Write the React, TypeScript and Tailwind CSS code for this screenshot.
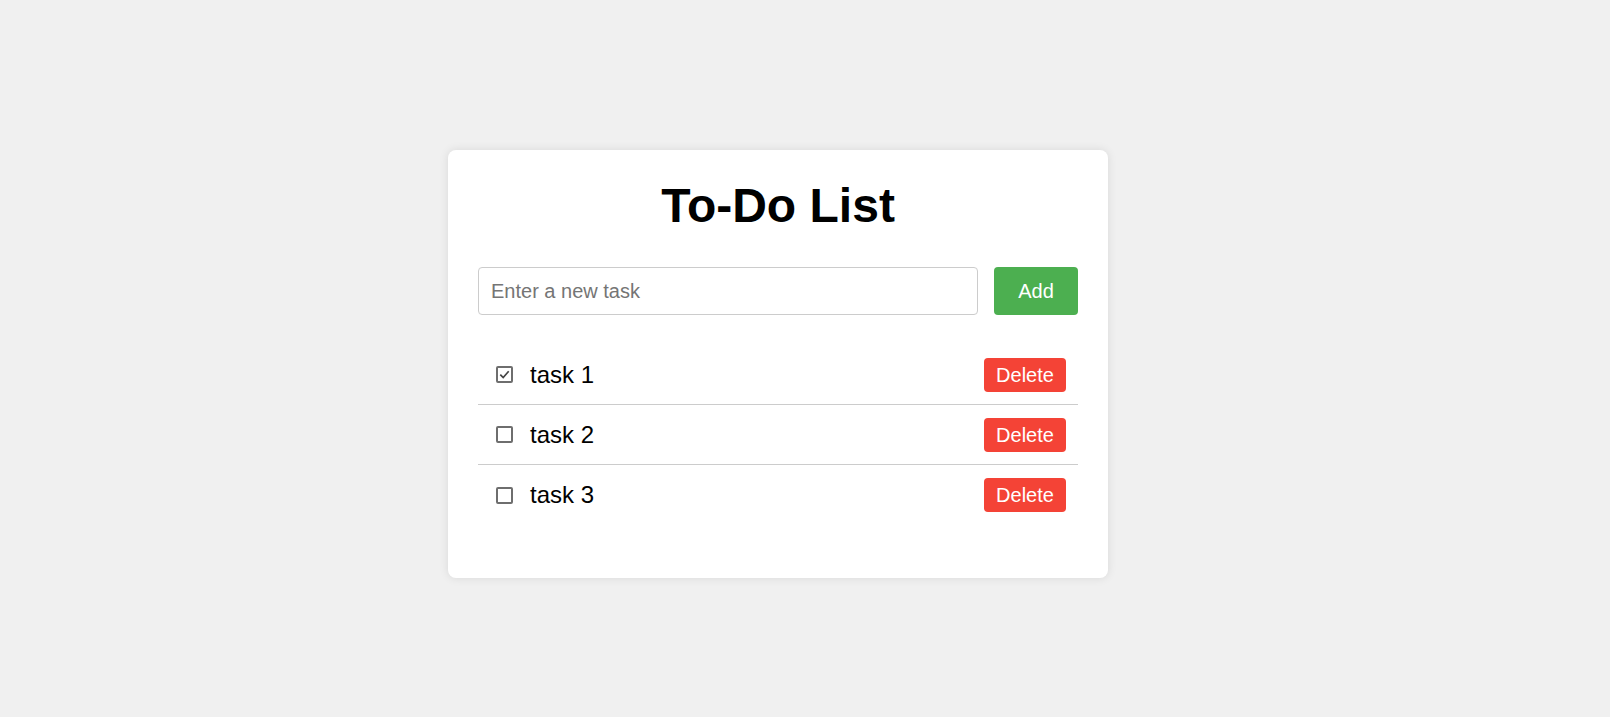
import React, { useState } from "react";

type Task = { id: number; text: string; done: boolean };

export default function App() {
  const [tasks, setTasks] = useState<Task[]>([
    { id: 1, text: "task 1", done: true },
    { id: 2, text: "task 2", done: false },
    { id: 3, text: "task 3", done: false },
  ]);
  const [value, setValue] = useState("");

  const toggle = (id: number) =>
    setTasks((t) => t.map((x) => (x.id === id ? { ...x, done: !x.done } : x)));
  const remove = (id: number) => setTasks((t) => t.filter((x) => x.id !== id));
  const add = () => {
    if (!value.trim()) return;
    setTasks((t) => [...t, { id: Date.now(), text: value.trim(), done: false }]);
    setValue("");
  };

  return (
    <div
      className="min-h-[717px] w-full bg-[#f0f0f0] pt-[150px] pl-[448px]"
      style={{ fontFamily: '"Liberation Sans", Arial, sans-serif' }}
    >
      <div className="w-[660px] rounded-[8px] bg-white px-[30px] pt-[30px] pb-[30px] shadow-[0_0_10px_rgba(0,0,0,0.1)]">
        <h1 className="m-0 text-center text-[48px] font-bold leading-[52px] text-black">
          To-Do List
        </h1>
        <div className="mt-[35px] flex h-[48px] items-stretch">
          <input
            value={value}
            onChange={(e) => setValue(e.target.value)}
            onKeyDown={(e) => e.key === "Enter" && add()}
            placeholder="Enter a new task"
            className="min-w-0 flex-1 rounded-[4px] border border-[#cccccc] px-[12px] text-[20px] text-black outline-none placeholder:text-[#757575]"
          />
          <button
            onClick={add}
            className="ml-[16px] w-[84px] rounded-[4px] bg-[#4caf50] text-[20px] text-white"
          >
            Add
          </button>
        </div>
        <ul className="mt-[30px] mb-[23px]">
          {tasks.map((t, i) => (
            <li
              key={t.id}
              className={`box-border flex h-[60px] items-center pl-[18px] pr-[12px] ${
                i < tasks.length - 1 ? "border-b border-[#cccccc]" : ""
              }`}
            >
              <label className="relative flex h-[17px] w-[17px] shrink-0 cursor-pointer items-center justify-center">
                <input
                  type="checkbox"
                  checked={t.done}
                  onChange={() => toggle(t.id)}
                  className="absolute inset-0 m-0 h-[17px] w-[17px] cursor-pointer appearance-none rounded-[2px] border-2 border-[#6e6e6e] bg-white"
                />
                {t.done && (
                  <svg
                    viewBox="0 0 17 17"
                    className="pointer-events-none absolute inset-0 h-[17px] w-[17px]"
                  >
                    <path
                      d="M4.3 8.6 L7.2 11.5 L12.7 5.3"
                      fill="none"
                      stroke="#444444"
                      strokeWidth="1.7"
                    />
                  </svg>
                )}
              </label>
              <span className="ml-[17px] flex-1 text-[24px] leading-[28px] text-black">
                {t.text}
              </span>
              <button
                onClick={() => remove(t.id)}
                className="h-[34px] w-[82px] rounded-[4px] bg-[#f44336] text-[20px] text-white"
              >
                Delete
              </button>
            </li>
          ))}
        </ul>
      </div>
    </div>
  );
}
